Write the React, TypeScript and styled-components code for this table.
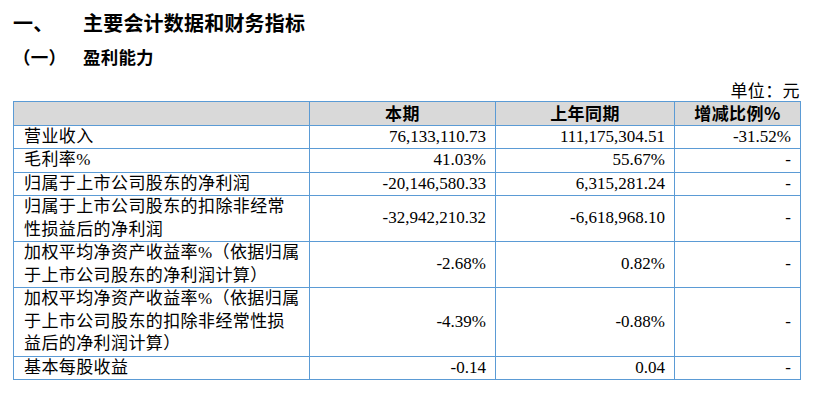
import React from "react";
import styled, { createGlobalStyle } from "styled-components";

const Global = createGlobalStyle`
  html, body { margin: 0; padding: 0; background: #fff; }
  body { font-family: "Liberation Serif", "Noto Sans CJK SC", serif; color: #000; }
`;

const Page = styled.div`
  width: 824px;
  height: 409px;
  padding-left: 13px;
  box-sizing: border-box;
  overflow: hidden;
`;

const Heading = styled.div<{ $size: number; $lh: number; $top: number }>`
  display: flex;
  margin-top: ${(p) => p.$top}px;
  font-family: "Noto Sans CJK SC", sans-serif;
  font-weight: 700;
  font-size: ${(p) => p.$size}px;
  line-height: ${(p) => p.$lh}px;
  letter-spacing: 0.2px;
`;

const HeadingNum = styled.span<{ $indent: number }>`
  width: 70px;
  flex: none;
  padding-left: ${(p) => p.$indent}px;
  box-sizing: border-box;
`;

const Unit = styled.div`
  width: 787px;
  margin-top: 10px;
  text-align: right;
  font-family: "Noto Sans CJK SC", sans-serif;
  font-size: 17px;
  line-height: 22px;
  letter-spacing: 0.4px;
  padding-right: 0;
`;

const Table = styled.table`
  border-collapse: collapse;
  table-layout: fixed;
  width: 788px;
  font-size: 17px;
  line-height: 22.5px;
`;

const HeadCell = styled.th`
  background: #d9d9d9;
  border: 1px solid #5b9bd5;
  padding: 0;
  font-family: "Noto Sans CJK SC", sans-serif;
  font-weight: 700;
  font-size: 17px;
  text-align: center;
  letter-spacing: 0.4px;
`;

const Label = styled.td`
  border: 1px solid #5b9bd5;
  padding: 0 10px 0 10px;
  font-family: "Liberation Serif", "Noto Sans CJK SC", serif;
  letter-spacing: 0.4px;
  white-space: nowrap;
  vertical-align: middle;
`;

const Num = styled.td`
  border: 1px solid #5b9bd5;
  padding: 0 9px 0 4px;
  text-align: right;
  font-family: "Liberation Serif", serif;
  vertical-align: middle;
  white-space: nowrap;
`;

type Row = { label: string[]; cur: string; prev: string; change: string };

const rows: Row[] = [
  { label: ["营业收入"], cur: "76,133,110.73", prev: "111,175,304.51", change: "-31.52%" },
  { label: ["毛利率%"], cur: "41.03%", prev: "55.67%", change: "-" },
  { label: ["归属于上市公司股东的净利润"], cur: "-20,146,580.33", prev: "6,315,281.24", change: "-" },
  {
    label: ["归属于上市公司股东的扣除非经常", "性损益后的净利润"],
    cur: "-32,942,210.32",
    prev: "-6,618,968.10",
    change: "-",
  },
  {
    label: ["加权平均净资产收益率%（依据归属", "于上市公司股东的净利润计算）"],
    cur: "-2.68%",
    prev: "0.82%",
    change: "-",
  },
  {
    label: ["加权平均净资产收益率%（依据归属", "于上市公司股东的扣除非经常性损", "益后的净利润计算）"],
    cur: "-4.39%",
    prev: "-0.88%",
    change: "-",
  },
  { label: ["基本每股收益"], cur: "-0.14", prev: "0.04", change: "-" },
];

export default function App() {
  return (
    <Page>
      <Global />
      <Heading $size={20} $lh={28} $top={9}>
        <HeadingNum $indent={0}>一、</HeadingNum>
        <span>主要会计数据和财务指标</span>
      </Heading>
      <Heading $size={17.5} $lh={24} $top={8}>
        <HeadingNum $indent={0}>（一）</HeadingNum>
        <span>盈利能力</span>
      </Heading>
      <Unit>单位：元</Unit>
      <Table>
        <colgroup>
          <col style={{ width: 296 }} />
          <col style={{ width: 186 }} />
          <col style={{ width: 179 }} />
          <col style={{ width: 126 }} />
        </colgroup>
        <thead>
          <tr>
            <HeadCell></HeadCell>
            <HeadCell>本期</HeadCell>
            <HeadCell>上年同期</HeadCell>
            <HeadCell>增减比例%</HeadCell>
          </tr>
        </thead>
        <tbody>
          {rows.map((r, i) => (
            <tr key={i}>
              <Label>
                {r.label.map((l, j) => (
                  <React.Fragment key={j}>
                    {j > 0 && <br />}
                    {l}
                  </React.Fragment>
                ))}
              </Label>
              <Num>{r.cur}</Num>
              <Num>{r.prev}</Num>
              <Num>{r.change}</Num>
            </tr>
          ))}
        </tbody>
      </Table>
    </Page>
  );
}
